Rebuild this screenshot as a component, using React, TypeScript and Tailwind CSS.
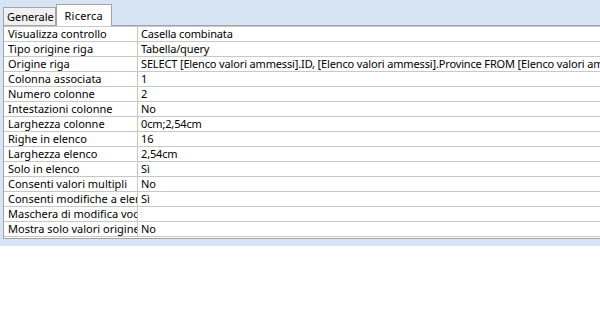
import React from "react";

const rows: [string, string][] = [
  ["Visualizza controllo", "Casella combinata"],
  ["Tipo origine riga", "Tabella/query"],
  ["Origine riga", "SELECT [Elenco valori ammessi].ID, [Elenco valori ammessi].Province FROM [Elenco valori ammessi];"],
  ["Colonna associata", "1"],
  ["Numero colonne", "2"],
  ["Intestazioni colonne", "No"],
  ["Larghezza colonne", "0cm;2,54cm"],
  ["Righe in elenco", "16"],
  ["Larghezza elenco", "2,54cm"],
  ["Solo in elenco", "Sì"],
  ["Consenti valori multipli", "No"],
  ["Consenti modifiche a elenco valori", "Sì"],
  ["Maschera di modifica voci di elenco", ""],
  ["Mostra solo valori origine riga", "No"],
];

export default function App() {
  return (
    <div className="w-[600px] h-[317px] overflow-hidden bg-white text-[11px] leading-[14px] text-black font-['Noto_Sans',sans-serif]">
      <div className="bg-[#d6e4f3] pl-[3px] pt-[4px] pb-[7px]">
        <div className="flex items-end h-[21px]">
          <div className="h-[18px] border border-b-0 border-[#a3a3a3] bg-[#f0f0f0] pl-[3px] pr-[1px] pt-px flex items-center">
            Generale
          </div>
          <div className="relative z-10 -mb-px h-[22px] w-[56px] border border-b-0 border-[#a3a3a3] bg-white flex items-center justify-center pt-px tracking-[0.2px]">
            Ricerca
          </div>
        </div>
        <div className="bg-white border border-r-0 border-[#a3a3a3] pb-px overflow-hidden">
          <div className="border-t border-[#c8c8c8]">
            {rows.map(([k, v], i) => (
              <div key={i} className="flex h-[15px] border-b border-[#c8c8c8]">
                <div className="w-[134px] shrink-0 border-r border-[#c8c8c8] pl-[4px] overflow-x-clip whitespace-nowrap">
                  {k}
                </div>
                <div className="flex-1 min-w-0 pl-[3px] overflow-x-clip whitespace-nowrap tracking-[-0.15px]">{v}</div>
              </div>
            ))}
          </div>
        </div>
      </div>
    </div>
  );
}
